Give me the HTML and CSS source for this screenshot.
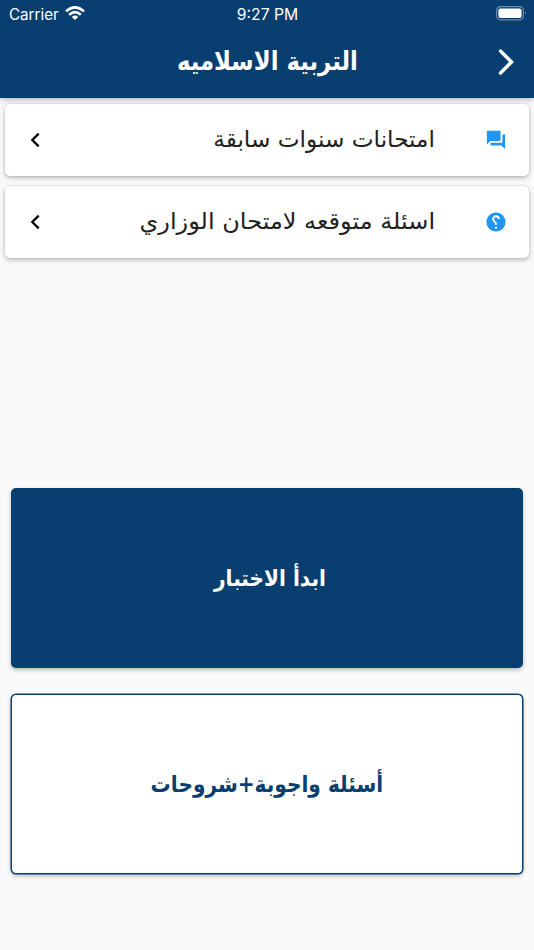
FILE: index.html
```html
<!DOCTYPE html>
<html lang="ar" dir="rtl">
<head>
<meta charset="utf-8">
<title>التربية الاسلاميه</title>
<link rel="stylesheet" href="styles.css">
</head>
<body>
<header class="header">
  <div class="status" dir="ltr">
    <div class="carrier"><span>Carrier</span>
      <svg width="20" height="15" viewBox="0 0 20 15" fill="none" stroke="#fff" stroke-width="2.5"><path d="M1 5.4Q10-2.6 19 5.4M4.2 8.7Q10 3.6 15.8 8.7"/><path d="M6.8 10.9Q10 8.3 13.2 10.9L10 14.1Z" fill="#fff" stroke="none"/></svg>
    </div>
    <time>9:27 PM</time>
    <svg class="battery" width="31" height="15" viewBox="0 0 31 15"><rect x=".6" y=".6" width="26.8" height="13.2" rx="4" fill="none" stroke="#6b8dac" stroke-width="1.2"/><rect x="2.4" y="2.4" width="23.2" height="9.6" rx="2.2" fill="#fff"/><path d="M29 5q1.8 2.3 0 4.6z" fill="#6b8dac"/></svg>
  </div>
  <div class="toolbar">
    <h1><span class="title">التربية الاسلاميه</span></h1>
    <svg class="back" width="18" height="28" viewBox="0 0 18 28" fill="none" stroke="#fff" stroke-width="3.4" stroke-linecap="round"><path d="M3.5 3L14.5 14 3.5 25"/></svg>
  </div>
</header>
<main>
  <nav class="list">
    <a class="row">
      <svg class="icon" viewBox="0 0 24 24" fill="#2196f3"><path d="M22 6h-3v9H6v2c0 .55.45 1 1 1h11l4 4zM17 12V3c0-.55-.45-1-1-1H3c-.55 0-1 .45-1 1v14l4-4h10c.55 0 1-.45 1-1z"/></svg>
      <span class="label past">امتحانات سنوات سابقة</span>
      <svg class="arrow" viewBox="0 0 10 16" fill="none" stroke="#000" stroke-width="2.3"><path d="M8.7 1.6L2.3 8l6.4 6.4"/></svg>
    </a>
    <a class="row">
      <svg class="icon" viewBox="0 0 24 24" fill="#2196f3"><path transform="translate(24.5 -.5) scale(-1.04 1.04)" d="M12 2C6.48 2 2 6.48 2 12s4.48 10 10 10 10-4.48 10-10S17.52 2 12 2zm1 17h-2v-2h2v2zm2.07-7.75l-.9.92C13.45 12.9 13 13.5 13 15h-2v-.5c0-1.1.45-2.1 1.17-2.83l1.24-1.26c.37-.36.59-.86.59-1.41 0-1.1-.9-2-2-2s-2 .9-2 2H8c0-2.21 1.79-4 4-4s4 1.79 4 4c0 .88-.36 1.68-.93 2.25z"/></svg>
      <span class="label expected">اسئلة متوقعه لامتحان الوزاري</span>
      <svg class="arrow" viewBox="0 0 10 16" fill="none" stroke="#000" stroke-width="2.3"><path d="M8.7 1.6L2.3 8l6.4 6.4"/></svg>
    </a>
  </nav>
  <section class="actions">
    <button class="primary"><span class="start">ابدأ الاختبار</span></button>
    <button class="secondary"><span class="answers">أسئلة واجوبة+شروحات</span></button>
  </section>
</main>
</body>
</html>
```
FILE: styles.css
```css
*{box-sizing:border-box}
body{margin:0;height:950px;background:#fafafa;font-family:"DejaVu Sans",sans-serif;display:flex;flex-direction:column;overflow:hidden}
.header{height:98px;background:#083f70;color:#fff;box-shadow:0 1px 6px #0005}
.status{height:28px;padding:0 7px 0 9px;display:grid;grid-template-columns:1fr auto 1fr;align-items:center;font:15.7px Inter,sans-serif}
.status time{margin-right:1px}
.carrier{display:flex;align-items:center;gap:6px;font-size:15.2px}
.carrier svg{margin-top:-2px}
.battery{justify-self:end;margin-top:-2px}
.toolbar{height:70px;display:grid;grid-template-columns:60px 1fr 60px;align-items:center}
h1{margin:-4px 0 0;grid-column:2;grid-row:1;text-align:center;font-size:26px;line-height:40px}
.title,.start,.answers{display:inline-block;transform:scaleX(.875)}
.back{grid-column:1;grid-row:1;justify-self:center;margin:-2px 0 0 3px}
main{flex:1;display:flex;flex-direction:column}
.list{display:flex;flex-direction:column;gap:10px;padding:6px 5px 0}
.row{height:72px;background:#fff;border-radius:5px;box-shadow:0 2px 5px #0004,0 0 2px #0002;display:flex;align-items:center;padding:0 22px 0 25px}
.icon{width:22px;height:22px;margin-left:50px}
.label{font-size:23px;color:#212121;white-space:nowrap;transform-origin:right center;margin-top:-2px}
.past{transform:scaleX(1.008)}
.expected{transform:scaleX(1.044)}
.arrow{width:10px;height:16px;margin-right:auto}
.actions{margin:230px 11px 0;display:flex;flex-direction:column;gap:26px}
button{height:180px;border-radius:5px;border:0;padding:0;font:bold 23px "DejaVu Sans",sans-serif;box-shadow:0 2px 4px #0004;white-space:nowrap}
.primary{background:#083f70;color:#fff}
.start{transform:translateX(3px) scaleX(.875)}
.secondary{background:#fff;color:#083f70;border:1px solid #083f70;box-shadow:0 0 0 .5px #083f70,0 2px 4px #0004}
```
